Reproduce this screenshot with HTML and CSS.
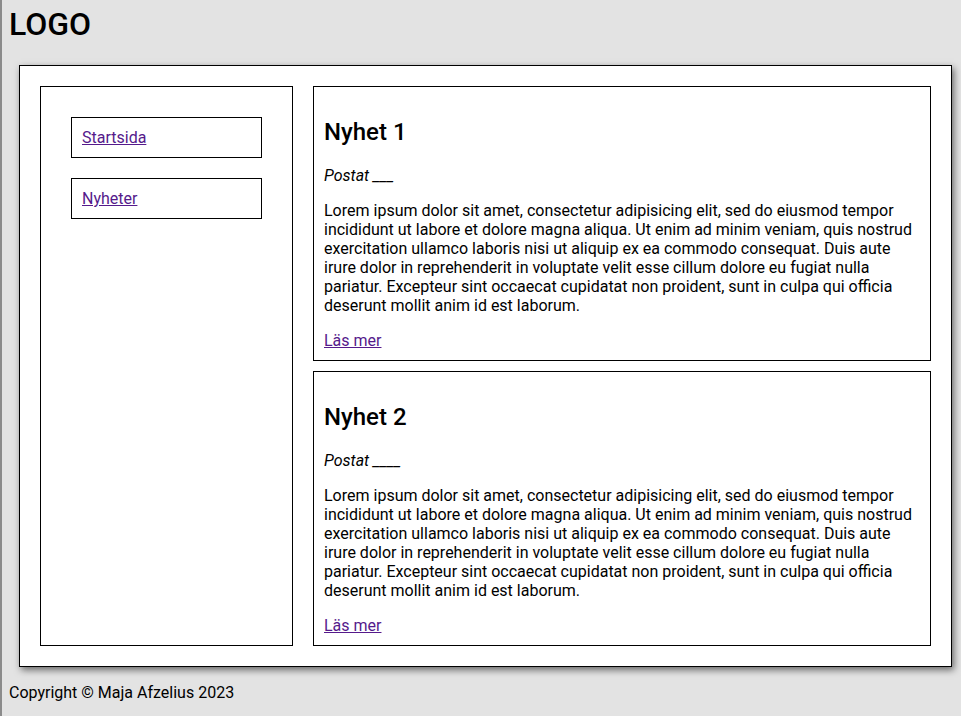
FILE: index.html
```html
<!DOCTYPE html>
<html lang="sv">
<head>
<meta charset="utf-8">
<title>Nyheter</title>
<link rel="stylesheet" href="styles.css">
</head>
<body>
<header class="site-header">
  <h1 class="logo">LOGO</h1>
</header>
<main class="page">
  <nav class="sidebar">
    <ul class="nav-list">
      <li class="nav-item"><a href="#">Startsida</a></li>
      <li class="nav-item"><a href="#">Nyheter</a></li>
    </ul>
  </nav>
  <section class="news">
    <article class="news-item">
      <h2 class="news-title">Nyhet 1</h2>
      <p class="news-meta">Postat ___</p>
      <p class="news-text">Lorem ipsum dolor sit amet, consectetur adipisicing elit, sed do eiusmod tempor incididunt ut labore et dolore magna aliqua. Ut enim ad minim veniam, quis nostrud exercitation ullamco laboris nisi ut aliquip ex ea commodo consequat. Duis aute irure dolor in reprehenderit in voluptate velit esse cillum dolore eu fugiat nulla pariatur. Excepteur sint occaecat cupidatat non proident, sunt in culpa qui officia deserunt mollit anim id est laborum.</p>
      <a class="read-more" href="#">Läs mer</a>
    </article>
    <article class="news-item">
      <h2 class="news-title">Nyhet 2</h2>
      <p class="news-meta">Postat ____</p>
      <p class="news-text">Lorem ipsum dolor sit amet, consectetur adipisicing elit, sed do eiusmod tempor incididunt ut labore et dolore magna aliqua. Ut enim ad minim veniam, quis nostrud exercitation ullamco laboris nisi ut aliquip ex ea commodo consequat. Duis aute irure dolor in reprehenderit in voluptate velit esse cillum dolore eu fugiat nulla pariatur. Excepteur sint occaecat cupidatat non proident, sunt in culpa qui officia deserunt mollit anim id est laborum.</p>
      <a class="read-more" href="#">Läs mer</a>
    </article>
  </section>
</main>
<footer class="site-footer">Copyright © Maja Afzelius 2023</footer>
</body>
</html>
```
FILE: styles.css
```css
html {
  background: #e3e3e3;
}
body {
  margin: 0;
  min-height: 716px;
  box-sizing: border-box;
  border-left: 2px solid #8b8b8b;
  padding: 5px 9px 0 7px;
  font-family: Roboto, "Liberation Sans", sans-serif;
  font-size: 16px;
  color: #000;
}
a {
  color: #551a8b;
}
.logo {
  margin: 0;
  font-size: 32px;
  font-weight: 500;
}
.page {
  margin: 22px 0 0 10px;
  background: #fff;
  border: 1px solid #000;
  box-shadow: 2px 3px 7px rgba(0, 0, 0, 0.55);
  padding: 20px;
  display: grid;
  grid-template-columns: 253px 1fr;
  gap: 20px;
}
.sidebar {
  border: 1px solid #000;
  padding: 30px;
}
.nav-list {
  list-style: none;
  margin: 0;
  padding: 0;
  display: flex;
  flex-direction: column;
  gap: 20px;
}
.nav-item {
  border: 1px solid #000;
  padding: 10px;
}
.news {
  display: flex;
  flex-direction: column;
  gap: 10px;
}
.news-item {
  border: 1px solid #000;
  padding: 11px 10px 10px;
}
.news-title {
  font-size: 24px;
  font-weight: 500;
  margin: 20px 0;
}
.news-meta {
  font-style: italic;
  margin: 16px 0;
}
.news-text {
  margin: 16px 0;
}
.site-footer {
  padding-top: 16px;
}
```
